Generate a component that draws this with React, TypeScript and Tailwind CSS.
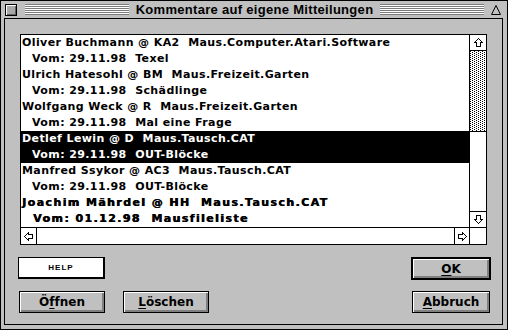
import React from 'react';

const rows = [
  { from: 'Oliver Buchmann @ KA2', area: 'Maus.Computer.Atari.Software', date: '29.11.98', subj: 'Texel' },
  { from: 'Ulrich Hatesohl @ BM', area: 'Maus.Freizeit.Garten', date: '29.11.98', subj: 'Schädlinge' },
  { from: 'Wolfgang Weck @ R', area: 'Maus.Freizeit.Garten', date: '29.11.98', subj: 'Mal eine Frage' },
  { from: 'Detlef Lewin @ D', area: 'Maus.Tausch.CAT', date: '29.11.98', subj: 'OUT-Blöcke', selected: true },
  { from: 'Manfred Ssykor @ AC3', area: 'Maus.Tausch.CAT', date: '29.11.98', subj: 'OUT-Blöcke' },
  { from: 'Joachim Mährdel @ HH', area: 'Maus.Tausch.CAT', date: '01.12.98', subj: 'Mausfileliste', unread: true },
];

const rotations = {
  up: '',
  right: 'rotate-90',
  down: 'rotate-180',
  left: '-rotate-90',
};

function Arrow({ dir }: { dir: 'up' | 'down' | 'left' | 'right' }) {
  return (
    <svg width="11" height="11" viewBox="0 0 11 11" className={rotations[dir]}>
      <path
        d="M5.5 1.5 L9.5 5.5 L7.5 5.5 L7.5 9.5 L3.5 9.5 L3.5 5.5 L1.5 5.5 Z"
        fill="white"
        stroke="black"
        strokeWidth="1"
        shapeRendering="crispEdges"
      />
    </svg>
  );
}

function Stripes() {
  return (
    <div className="flex-1 h-[11px] bg-[repeating-linear-gradient(to_bottom,#7b7b7b_0px,#7b7b7b_1px,#ffffff_1px,#ffffff_2px)]" />
  );
}

function Btn({ children, className = '' }: { children: React.ReactNode; className?: string }) {
  return (
    <div
      className={`h-[22px] border border-black bg-[#c0c0c0] shadow-[inset_1px_1px_0_#fff,inset_-2px_-2px_0_#808080] flex items-center justify-center text-[12px] font-bold font-['DejaVu_Sans',sans-serif] ${className}`}
    >
      {children}
    </div>
  );
}

export default function App() {
  return (
    <div className="w-[508px] h-[330px] border border-black bg-[#c0c0c0] flex flex-col font-['Liberation_Sans',Arial,sans-serif] text-black select-none">
      {/* Title bar */}
      <div className="h-[17px] flex items-center pl-[4px] pr-[5px] shrink-0">
        <div className="w-[12px] h-[12px] border border-black bg-[#a8a8a8] shadow-[inset_1px_1px_0_#fff,inset_-1px_-1px_0_#606060]" />
        <div className="w-[8px]" />
        <Stripes />
        <div className="px-[7px] text-[13px] font-bold leading-none tracking-[0.3px]">
          Kommentare auf eigene Mitteilungen
        </div>
        <Stripes />
        <div className="w-[6px]" />
        <svg width="12" height="12" viewBox="0 0 12 12">
          <path d="M6 1.5 L10.5 10.5 L1.5 10.5 Z" fill="none" stroke="black" strokeWidth="1" />
        </svg>
      </div>

      {/* Window body */}
      <div className="flex-1 pl-[3px] pr-[4px] pb-[4px] flex flex-col">
        <div className="flex-1 border border-black flex flex-col pt-[15px] pl-[15px]">
          {/* List box */}
          <div className="w-[467px] h-[211px] border border-black bg-white flex flex-col">
            <div className="flex flex-1 min-h-0">
              <div className="flex-1 flex flex-col text-[11px] font-bold leading-[16px] whitespace-pre font-['DejaVu_Sans',sans-serif]">
                {rows.map((r, i) => {
                  const tone = r.selected ? 'bg-black text-white' : '';
                  const heavy = r.unread ? 'tracking-[1.4px] [text-shadow:0.6px_0_0_#000]' : 'tracking-[0.4px]';
                  return (
                    <React.Fragment key={i}>
                      <div className={`h-[16px] pl-[1px] ${tone} ${heavy}`}>
                        {r.from}  {r.area}
                      </div>
                      <div className={`h-[16px] ${r.unread ? 'pl-[12px]' : 'pl-[11px]'} ${tone} ${heavy}`}>
                        Vom: {r.date}  {r.subj}
                      </div>
                    </React.Fragment>
                  );
                })}
              </div>
              {/* Vertical scrollbar */}
              <div className="w-[17px] border-l border-black flex flex-col">
                <div className="h-[16px] border-b border-black flex items-center justify-center">
                  <Arrow dir="up" />
                </div>
                <div className="h-[81px] border-b border-black">
                  <svg width="16" height="80" className="block">
                    <defs>
                      <pattern id="dots" width="4" height="2" patternUnits="userSpaceOnUse">
                        <rect x="0" y="0" width="1" height="1" fill="#000" />
                        <rect x="2" y="1" width="1" height="1" fill="#000" />
                      </pattern>
                    </defs>
                    <rect width="16" height="80" fill="url(#dots)" />
                  </svg>
                </div>
                <div className="flex-1" />
                <div className="h-[16px] border-t border-black flex items-center justify-center">
                  <Arrow dir="down" />
                </div>
              </div>
            </div>
            {/* Horizontal scrollbar */}
            <div className="h-[17px] border-t border-black flex">
              <div className="w-[16px] border-r border-black flex items-center justify-center">
                <Arrow dir="left" />
              </div>
              <div className="flex-1" />
              <div className="w-[15px] border-l border-black flex items-center justify-center">
                <Arrow dir="right" />
              </div>
              <div className="w-[17px] border-l border-black" />
            </div>
          </div>

          {/* Buttons */}
          <div className="mt-[12px] pr-[11px] flex justify-between items-start">
            <div className="-ml-[2px] w-[87px] h-[22px] bg-white border-t border-l border-black border-r-2 border-b-2 flex items-center justify-center text-[8px] font-bold tracking-[1px]">
              HELP
            </div>
            <div className="w-[80px] h-[23px] border-2 border-black bg-[#c0c0c0] shadow-[inset_1px_1px_0_#fff,inset_-2px_-2px_0_#808080] flex items-center justify-center text-[12px] font-bold font-['DejaVu_Sans',sans-serif]">
              <span className="underline underline-offset-2">O</span>K
            </div>
          </div>
          <div className="mt-[11px] pr-[12px] flex items-start">
            <Btn className="-ml-[1px] w-[86px]">
              Ö<span className="underline underline-offset-2">f</span>fnen
            </Btn>
            <Btn className="ml-[18px] w-[86px]">
              <span className="underline underline-offset-2">L</span>öschen
            </Btn>
            <div className="flex-1" />
            <Btn className="w-[78px]">
              <span className="underline underline-offset-2">A</span>bbruch
            </Btn>
          </div>
        </div>
      </div>
    </div>
  );
}
